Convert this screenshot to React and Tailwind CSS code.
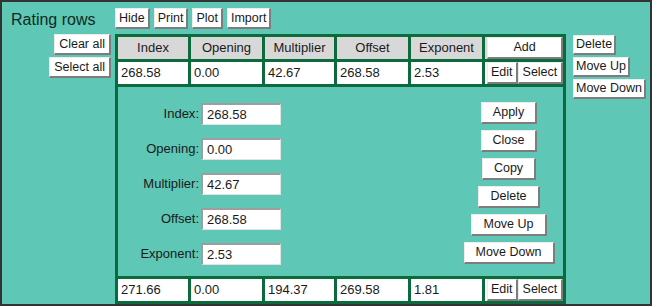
import React from 'react';

const font = { fontFamily: '"Liberation Sans", Arial, sans-serif' };

const btn =
  'bg-white text-[#1a1a1a] text-[12.5px] leading-none flex items-center justify-center whitespace-nowrap border-t border-l border-t-[#ececec] border-l-[#ececec] border-r-2 border-b-2 border-r-[#7d7d7d] border-b-[#7d7d7d]';

const rows = [
  ['268.58', '0.00', '42.67', '268.58', '2.53'],
  ['271.66', '0.00', '194.37', '269.58', '1.81'],
];

const fields = [
  ['Index', '268.58'],
  ['Opening', '0.00'],
  ['Multiplier', '42.67'],
  ['Offset', '268.58'],
  ['Exponent', '2.53'],
];

function DataRow({ values }) {
  return (
    <>
      {values.map((v, i) => (
        <div key={i} className="bg-white h-[22px] flex items-center pl-[3px] text-[13px] text-[#1a1a1a]">
          {v}
        </div>
      ))}
      <div className="bg-white h-[22px] flex items-stretch pl-[2px]">
        <button className={`${btn} px-[3px]`}>Edit</button>
        <button className={`${btn} px-[4px] bg-[#d3d3d3] flex-1`}>Select</button>
      </div>
    </>
  );
}

export default function App() {
  return (
    <div style={font} className="w-[652px] h-[306px] border-2 border-[#333] bg-[#5ec7b5] overflow-hidden flex flex-col">
      <div className="h-[33px] flex items-start pt-[6px]">
        <div className="w-[113px] pl-[9px] text-[16px] leading-[21px] mt-[1px] text-[#0f2a22]">Rating rows</div>
        <div className="flex gap-[4px]">
          {['Hide', 'Print', 'Plot', 'Import'].map((t) => (
            <button key={t} className={`${btn} h-[21px] px-[3px]`}>
              {t}
            </button>
          ))}
        </div>
      </div>

      <div className="flex">
        <div className="w-[113px] flex flex-col items-end pr-[4px] gap-[2px]">
          <button className={`${btn} h-[21px] px-[4px]`}>Clear all</button>
          <button className={`${btn} h-[21px] px-[4px]`}>Select all</button>
        </div>

        <div className="w-[451px] bg-[#0b6b3c] p-[3px] grid grid-cols-[70px_71px_69px_71px_71px_78px] gap-[3px]">
          {['Index', 'Opening', 'Multiplier', 'Offset', 'Exponent'].map((h) => (
            <div key={h} className="bg-[#d8d8d8] h-[22px] flex items-center justify-center text-[13px] text-[#1a1a1a]">
              {h}
            </div>
          ))}
          <div className="bg-[#d8d8d8] h-[22px] flex pl-[2px]">
            <button className={`${btn} w-full`}>Add</button>
          </div>

          <DataRow values={rows[0]} />

          <div className="col-span-6 bg-[#5ec7b5] h-[189px] flex justify-between pt-[15px]">
            <div className="flex flex-col gap-[13px] pt-[1px]">
              {fields.map(([label, val]) => (
                <div key={label} className="flex items-center gap-[2px]">
                  <div className="w-[81px] text-right text-[13px] text-[#1a1a1a]">{label}:</div>
                  <input
                    readOnly
                    defaultValue={val}
                    className="w-[80px] h-[22px] bg-white text-[13px] text-[#1a1a1a] pl-[4px] outline-none border-t-2 border-l-2 border-t-[#9e9e9e] border-l-[#9e9e9e] border-r border-b border-r-[#e2e2e2] border-b-[#e2e2e2]"
                  />
                </div>
              ))}
            </div>
            <div className="w-[100px] mr-[4px] flex flex-col items-center gap-[6px]">
              {['Apply', 'Close', 'Copy', 'Delete', 'Move Up', 'Move Down'].map((t) => (
                <button key={t} className={`${btn} h-[22px] px-[11px]`}>
                  {t}
                </button>
              ))}
            </div>
          </div>

          <DataRow values={rows[1]} />
        </div>

        <div className="flex flex-col items-start gap-[2px] pl-[7px] pt-[1px]">
          {['Delete', 'Move Up', 'Move Down'].map((t) => (
            <button key={t} className={`${btn} h-[20px] px-[2px]`}>
              {t}
            </button>
          ))}
        </div>
      </div>
    </div>
  );
}
